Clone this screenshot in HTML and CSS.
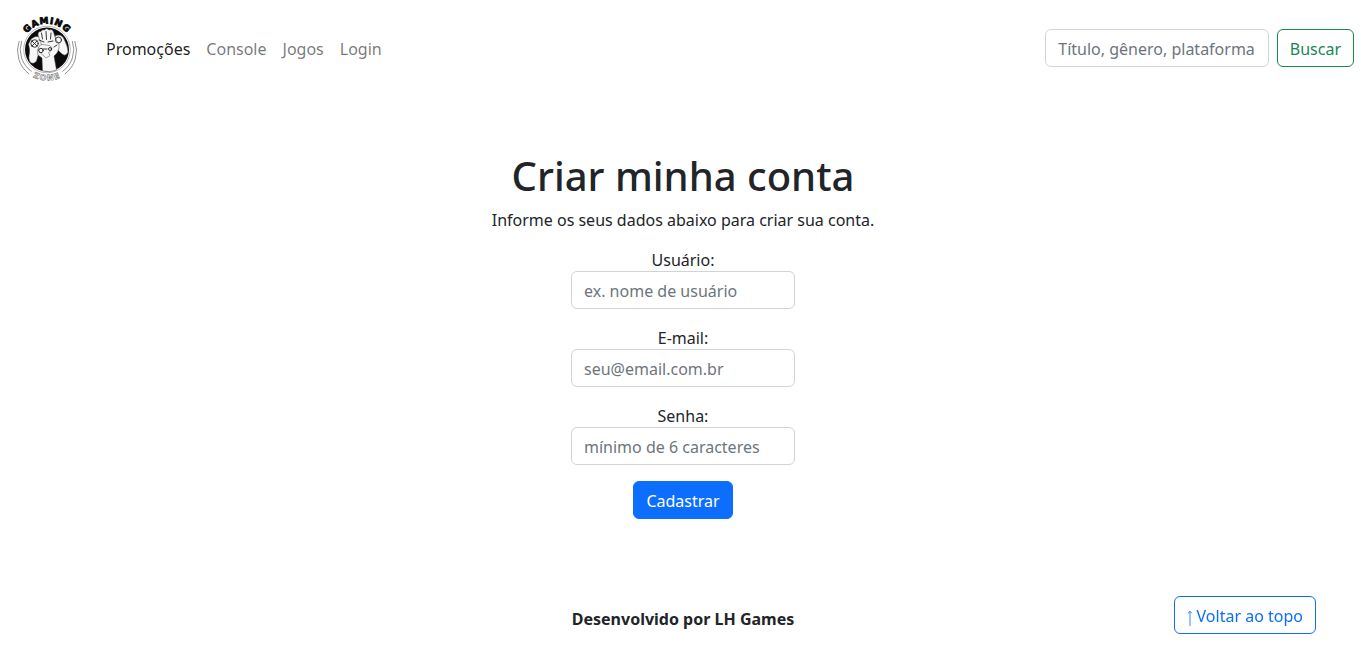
FILE: index.html
```html
<!DOCTYPE html>
<html lang="pt-br">
<head>
<meta charset="utf-8">
<title>Criar minha conta</title>
<link rel="stylesheet" href="styles.css">
</head>
<body>
<nav class="navbar">
  <a class="brand" href="#">
    <svg class="logo" viewBox="0 0 76 80" role="img" aria-label="Gaming Zone">
      <defs>
        <path id="arc-top" d="M11 41.800a26 26 0 0 1 52 0"/>
        <path id="arc-bottom" d="M5.500 41a31.500 31.500 0 0 0 63 0"/>
      </defs>
      <circle cx="37" cy="41.500" r="23.300" fill="#fff" stroke="#888" stroke-width=".6"/>
      <circle cx="37" cy="41.500" r="22" fill="#0c0a0a"/>
      <g fill="none" stroke="#777" stroke-width=".8">
        <path d="M11.700 33a26.500 26.500 0 0 0 10 30.500M62.300 33a26.500 26.500 0 0 1-10 30.500"/>
        <path d="M9.200 33a29 29 0 0 0 10 33M64.800 33a29 29 0 0 1-10 33"/>
      </g>
      <g fill="#f7f7f7" stroke="#444" stroke-width=".5" stroke-linejoin="round">
        <path d="M45 28q6-3 9 3 4 8 4 13-2 5-6 2-5-4-6-8z"/>
        <path d="M20.500 32q4-5 9-3l14 7-10 8-5 2-2 7q-3 4-6.500 1-2-4-.500-9 .500-4-1-9z"/>
        <path d="M28 27q0-4 3-3.500 1-2.500 3.500-1.500 2-2.500 4.500 0 3-1.500 4.500 2l2.500 8 3 3q1 5-2 10l-3 3 2.500 14q-6 3-14 1l-.500-13-4-3q-2-5 1-8l3-1z"/>
        <path d="M28.500 43q-1-6 4-6.500l7 1q4 2 2 5l-3 2 1.500 3-4 2.500z"/>
      </g>
      <g fill="none" stroke="#222" stroke-width=".9" stroke-linecap="round">
        <path d="M31.500 25l1 6M36 23.500l.5 8M41 25l-.5 6M22 33l5 5m0-5-5 5M29 32l5 2M38 34l5-1M33 41h4M44 39l3-2"/>
        <circle cx="48.500" cy="32" r="3"/>
        <circle cx="24.500" cy="35.500" r="3.700"/>
        <circle cx="31" cy="42.500" r="2.200"/>
        <circle cx="40" cy="41" r="1.500"/>
      </g>
      <text class="logo-top"><textPath href="#arc-top" startOffset="50%" text-anchor="middle">GAMING</textPath></text>
      <text class="logo-bottom"><textPath href="#arc-bottom" startOffset="50%" text-anchor="middle">ZONE</textPath></text>
    </svg>
  </a>
  <div class="links">
    <a class="link active" href="#">Promoções</a>
    <a class="link" href="#">Console</a>
    <a class="link" href="#">Jogos</a>
    <a class="link" href="#">Login</a>
  </div>
  <form class="search">
    <input class="field" type="text" placeholder="Título, gênero, plataforma">
    <button class="btn btn-search" type="button">Buscar</button>
  </form>
</nav>
<main class="signup">
  <h1 class="title">Criar minha conta</h1>
  <p class="intro">Informe os seus dados abaixo para criar sua conta.</p>
  <form class="form">
    <label class="group">Usuário:<input class="field" type="text" placeholder="ex. nome de usuário"></label>
    <label class="group">E-mail:<input class="field" type="email" placeholder="seu@email.com.br"></label>
    <label class="group">Senha:<input class="field" type="password" placeholder="mínimo de 6 caracteres"></label>
    <button class="btn btn-submit" type="button">Cadastrar</button>
  </form>
</main>
<footer class="footer">Desenvolvido por LH Games</footer>
<a class="btn btn-top" href="#"><svg class="arrow" viewBox="0 0 6 18"><path d="M3 2.500v14.500" stroke-width="1.200" opacity=".7"/><path d="M1.200 4.200 3 2.400l1.800 1.800"/></svg>Voltar ao topo</a>
</body>
</html>
```
FILE: styles.css
```css
* { box-sizing: border-box; }
body {
  margin: 0;
  height: 656px;
  overflow: hidden;
  background: #fff;
  color: #212529;
  font: 400 16px/24px "Noto Sans", "Liberation Sans", sans-serif;
}
a { text-decoration: none; }
.navbar {
  display: flex;
  align-items: center;
  height: 96px;
  padding: 0 12px 0 10px;
}
.brand { display: flex; margin-right: 12px; }
.logo { width: 76px; height: 80px; overflow: visible; }
.logo-top {
  font: 700 9px "DejaVu Sans", sans-serif;
  letter-spacing: .8px;
  fill: #080808;
  stroke: #080808;
  stroke-width: .8px;
}
.logo-bottom {
  font: 700 8px "DejaVu Sans", sans-serif;
  letter-spacing: 1.1px;
  fill: #fff;
  stroke: #777;
  stroke-width: .6px;
}
.links { display: flex; }
.link { padding: 9px 8px 7px; color: rgba(0, 0, 0, .55); }
.link.active { color: rgba(0, 0, 0, .9); }
.search { display: flex; gap: 8px; margin-left: auto; }
.field {
  display: block;
  width: 224px;
  height: 38px;
  padding: 7px 12px 5px;
  border: 1px solid #ced4da;
  border-radius: 6px;
  background: #fff;
  color: #212529;
  font: inherit;
  appearance: none;
}
.search .field { padding-right: 11px; padding-left: 12.5px; }
.field::placeholder { color: #6c757d; opacity: 1; }
.btn {
  height: 38px;
  padding: 7px 12px 5px;
  border: 1px solid;
  border-radius: 6px;
  background: transparent;
  font: inherit;
}
.btn-search { color: #198754; }
.signup {
  display: flex;
  flex-direction: column;
  align-items: center;
  padding-top: 56px;
}
.title { margin: 0 0 8px; font-size: 40px; font-weight: 500; line-height: 48px; }
.intro { margin: 0 0 16px; }
.form { display: flex; flex-direction: column; align-items: center; gap: 16px; }
.group { display: flex; flex-direction: column; align-items: center; }
.group .field { margin-top: -1px; }
.group + .group { padding-top: 1px; }
.btn-submit { border-color: #0d6efd; background: #0d6efd; color: #fff; }
.footer { margin-top: 88px; text-align: center; font-weight: 700; }
.btn-top {
  display: flex;
  position: fixed;
  right: 50px;
  bottom: 22px;
  color: #0d6efd;
}
.arrow {
  width: 6px;
  height: 18px;
  margin: 5px 3.5px 0 0;
  fill: none;
  stroke: currentColor;
}
```
